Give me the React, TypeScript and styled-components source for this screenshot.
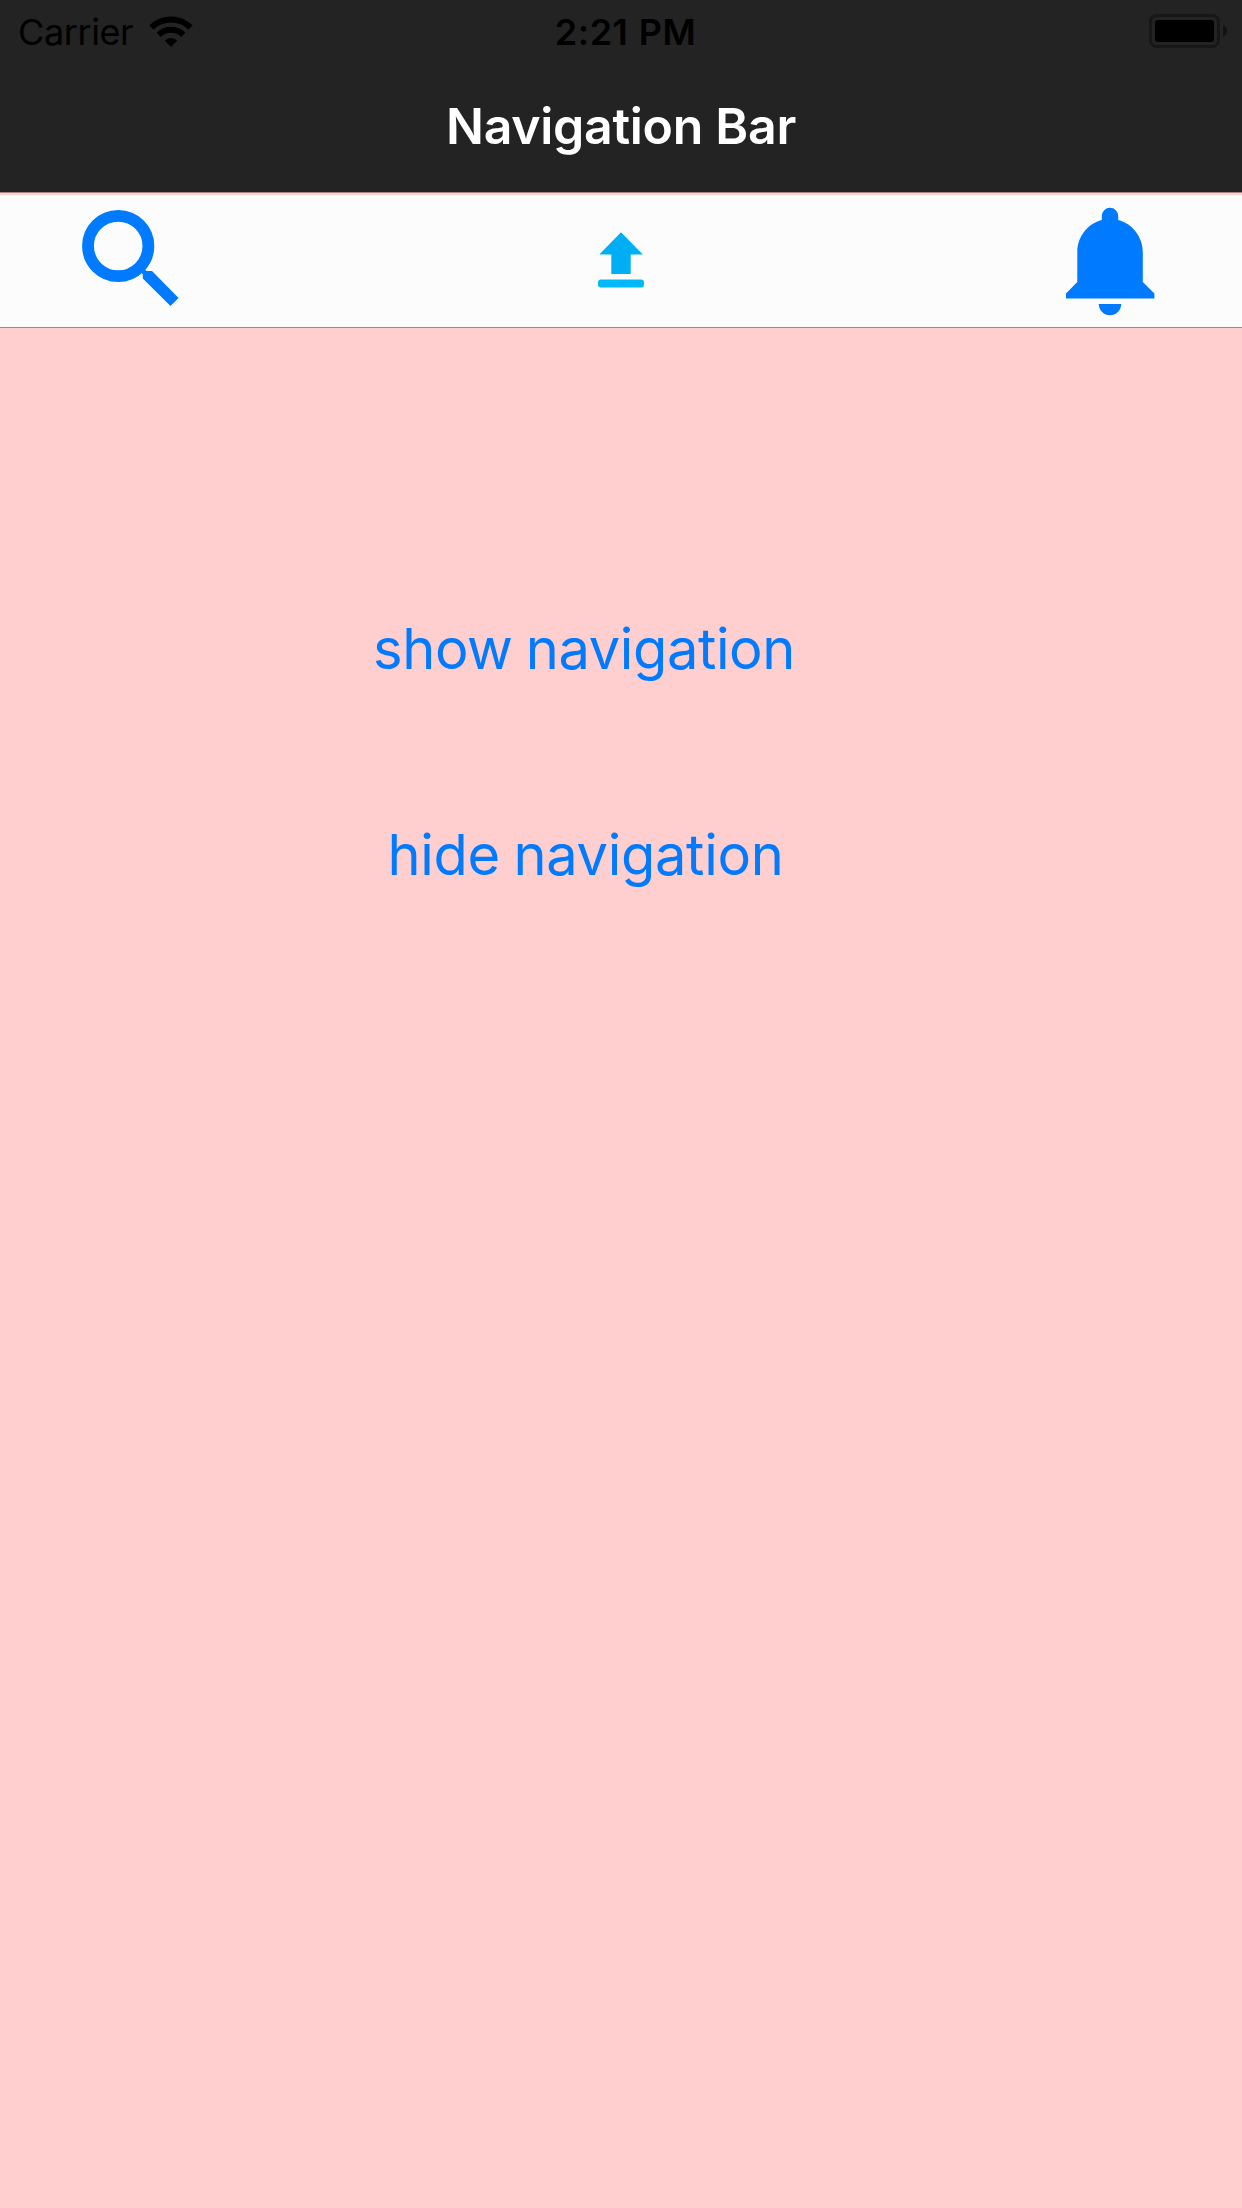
import React from "react";
import styled, { createGlobalStyle } from "styled-components";

const GlobalStyle = createGlobalStyle`
  html, body { margin: 0; padding: 0; background: #ffcece; }
  body { font-family: Inter, "Liberation Sans", sans-serif; }
  svg { display: block; }
`;

const Screen = styled.main`
  width: 1242px;
  height: 2208px;
  overflow: hidden;
  display: flex;
  flex-direction: column;
  background: #ffcece;
`;

const Header = styled.header`
  height: 192px;
  flex: none;
  background: #232323;
  border-bottom: 1px solid #a58787;
`;

const StatusBar = styled.div`
  height: 60px;
  display: grid;
  grid-template-columns: 1fr auto 1fr;
  align-items: center;
  padding: 0 14px 0 18px;
  color: #000;
  font-size: 36px;
  line-height: 60px;
`;

const Carrier = styled.div`
  display: flex;
  align-items: center;
  gap: 16px;
  padding-top: 2px;
  letter-spacing: -0.4px;
`;

const Clock = styled.div`
  font-weight: 560;
  font-size: 36px;
  letter-spacing: 0.5px;
  word-spacing: 1px;
  padding: 2px 0 0 5px;
`;

const BatterySlot = styled.div`
  justify-self: end;
  padding-bottom: 1px;
`;

const Title = styled.h1`
  margin: 0;
  height: 132px;
  line-height: 132px;
  text-align: center;
  color: #fff;
  font-size: 50px;
  font-weight: 590;
  letter-spacing: -0.3px;
`;

const Toolbar = styled.nav`
  height: 132px;
  flex: none;
  margin-top: 2px;
  padding: 0 60px;
  display: flex;
  justify-content: space-between;
  background: #fcfcfc;
  border-bottom: 1px solid #a58787;
`;

const ToolButton = styled.button`
  width: 150px;
  height: 132px;
  padding: 0;
  border: 0;
  background: none;
`;

const Actions = styled.section`
  display: flex;
  flex-direction: column;
  align-items: center;
  gap: 106px;
  width: 1168px;
  padding-top: 271px;
`;

const TextButton = styled.button<{ $spacing: number; $indent?: number }>`
  height: 100px;
  padding: 0 0 0 ${(p) => p.$indent ?? 0}px;
  border: 0;
  background: none;
  color: #007aff;
  font: 415 56px/100px Inter, "Liberation Sans", sans-serif;
  letter-spacing: ${(p) => p.$spacing}px;
  word-spacing: -2px;
  white-space: nowrap;
`;

const WifiIcon = () => (
  <svg width="44" height="32" viewBox="0 0 44 32">
    <g fill="none" stroke="#000" strokeWidth="6">
      <path d="M2.5 11.5 A27.5 27.5 0 0 1 41.5 11.5" />
      <path d="M9.7 18.8 A17.4 17.4 0 0 1 34.3 18.8" />
    </g>
    <path d="M15.7 24.6 Q22 19.6 28.3 24.6 L22 31 Z" />
  </svg>
);

const BatteryIcon = () => (
  <svg width="79" height="34" viewBox="0 0 79 34">
    <rect x="1.5" y="1.5" width="68" height="31" rx="6" fill="none" stroke="#171717" strokeWidth="3" />
    <rect x="6" y="6" width="59" height="22" rx="3" />
    <path d="M74 11 Q78 12.5 78 17 Q78 21.5 74 23 Z" fill="#131313" />
  </svg>
);

const SearchIcon = () => (
  <svg width="150" height="132" viewBox="60 195 150 132">
    <circle cx="118.2" cy="246" r="30.2" fill="none" stroke="#007aff" strokeWidth="11.8" />
    <path d="M142.8 271 H152 L178.6 298 L170.5 306 L142.8 278.5 Z" fill="#007aff" />
    <path d="M138 266 L147 275" stroke="#007aff" strokeWidth="5" />
  </svg>
);

const UploadIcon = () => (
  <svg width="150" height="132" viewBox="546 195 150 132">
    <path d="M621 232.3 L642.8 254.5 H630.7 V274 H611.3 V254.5 H599.3 Z" fill="#00aff3" />
    <rect x="598" y="279.6" width="46" height="8" rx="3" fill="#00b9fa" />
  </svg>
);

const BellIcon = () => (
  <svg width="150" height="132" viewBox="1032 195 150 132">
    <path
      d="M1101.8 220 V216 A8.2 8.2 0 0 1 1118.2 216 V220 C1132 223.5 1142.8 236.5 1142.8 252 V282 L1154.4 293.5 V298.5 H1066 V293.5 L1077.3 282 V252 C1077.3 236.5 1088 223.5 1101.8 220 Z M1098.7 304 H1121.3 C1121 310.5 1116 315.3 1110 315.3 C1104 315.3 1099 310.5 1098.7 304 Z"
      fill="#007aff"
    />
  </svg>
);

export default function App() {
  return (
    <Screen>
      <GlobalStyle />
      <Header>
        <StatusBar>
          <Carrier>
            Carrier
            <WifiIcon />
          </Carrier>
          <Clock>2:21 PM</Clock>
          <BatterySlot>
            <BatteryIcon />
          </BatterySlot>
        </StatusBar>
        <Title>Navigation Bar</Title>
      </Header>
      <Toolbar>
        <ToolButton aria-label="Search"><SearchIcon /></ToolButton>
        <ToolButton aria-label="Upload"><UploadIcon /></ToolButton>
        <ToolButton aria-label="Notifications"><BellIcon /></ToolButton>
      </Toolbar>
      <Actions>
        <TextButton $spacing={-0.4}>show navigation</TextButton>
        <TextButton $spacing={-0.3} $indent={3}>hide navigation</TextButton>
      </Actions>
    </Screen>
  );
}
